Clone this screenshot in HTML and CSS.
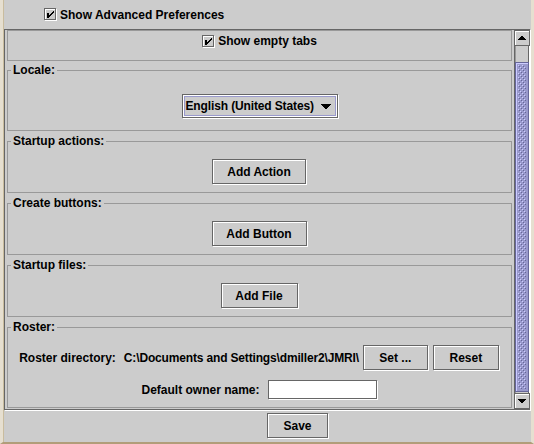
FILE: index.html
```html
<!DOCTYPE html>
<html>
<head>
<meta charset="utf-8">
<title>Preferences</title>
<link rel="stylesheet" href="styles.css">
</head>
<body>
<div class="window">
  <div class="top-row">
    <label class="check">
      <svg class="cb" width="13" height="13" viewBox="0 0 13 13" shape-rendering="crispEdges">
        <rect x="1.5" y="1.5" width="11" height="11" fill="none" stroke="#fff"/>
        <rect x="0.5" y="0.5" width="11" height="11" fill="none" stroke="#666"/>
        <rect x="3" y="5" width="2" height="5" fill="#000"/>
        <rect x="9" y="3" width="1" height="2" fill="#000"/>
        <rect x="8" y="4" width="1" height="2" fill="#000"/>
        <rect x="7" y="5" width="1" height="2" fill="#000"/>
        <rect x="6" y="6" width="1" height="2" fill="#000"/>
        <rect x="5" y="7" width="1" height="2" fill="#000"/>
      </svg>
      <span>Show Advanced Preferences</span>
    </label>
  </div>

  <div class="scrollpane">
    <div class="viewport">
      <div class="panel plain">
        <div class="row tabs-row">
          <label class="check">
            <svg class="cb" width="13" height="13" viewBox="0 0 13 13" shape-rendering="crispEdges">
              <rect x="1.5" y="1.5" width="11" height="11" fill="none" stroke="#fff"/>
              <rect x="0.5" y="0.5" width="11" height="11" fill="none" stroke="#666"/>
              <rect x="3" y="5" width="2" height="5" fill="#000"/>
              <rect x="9" y="3" width="1" height="2" fill="#000"/>
              <rect x="8" y="4" width="1" height="2" fill="#000"/>
              <rect x="7" y="5" width="1" height="2" fill="#000"/>
              <rect x="6" y="6" width="1" height="2" fill="#000"/>
              <rect x="5" y="7" width="1" height="2" fill="#000"/>
            </svg>
            <span>Show empty tabs</span>
          </label>
        </div>
      </div>

      <div class="panel titled locale">
        <div class="title">Locale:</div>
        <div class="row combo-row">
          <div class="combo">
            <div class="combo-inner">
              <span class="combo-text">English (United States)</span>
              <svg width="10" height="5" viewBox="0 0 10 5" shape-rendering="crispEdges">
                <path d="M0 0h10v1h-1v1h-1v1h-1v1h-1v1H4V4H3V3H2V2H1V1H0z" fill="#000"/>
              </svg>
            </div>
          </div>
        </div>
      </div>

      <div class="panel titled">
        <div class="title">Startup actions:</div>
        <div class="row btn-row"><button class="btn w-action">Add Action</button></div>
      </div>

      <div class="panel titled">
        <div class="title">Create buttons:</div>
        <div class="row btn-row"><button class="btn w-button">Add Button</button></div>
      </div>

      <div class="panel titled">
        <div class="title">Startup files:</div>
        <div class="row btn-row"><button class="btn w-file">Add File</button></div>
      </div>

      <div class="panel titled roster">
        <div class="title">Roster:</div>
        <div class="row btn-row roster-dir">
          <span class="lbl-dir">Roster directory:</span>
          <span class="lbl-path">C:\Documents and Settings\dmiller2\JMRI\</span>
          <button class="btn w-set">Set ...</button>
          <button class="btn w-reset">Reset</button>
        </div>
        <div class="row owner-row">
          <span class="lbl-owner">Default owner name:</span>
          <input class="field" type="text" value="">
        </div>
      </div>
    </div>

    <div class="scrollbar">
      <div class="sb-btn">
        <svg width="8" height="4" viewBox="0 0 8 4" shape-rendering="crispEdges">
          <path d="M3 0h2v1h1v1h1v1h1v1H0V3h1V2h1V1h1z" fill="#000"/>
        </svg>
      </div>
      <div class="sb-track">
        <div class="sb-thumb">
          <svg class="bumps" width="100%" height="100%" shape-rendering="crispEdges">
            <defs>
              <pattern id="bump" width="4" height="4" patternUnits="userSpaceOnUse">
                <rect x="0" y="0" width="1" height="1" fill="#ccccff"/>
                <rect x="2" y="2" width="1" height="1" fill="#ccccff"/>
                <rect x="1" y="1" width="1" height="1" fill="#666699"/>
                <rect x="3" y="3" width="1" height="1" fill="#666699"/>
              </pattern>
            </defs>
            <rect width="100%" height="100%" fill="url(#bump)"/>
          </svg>
        </div>
      </div>
      <div class="sb-btn">
        <svg width="8" height="4" viewBox="0 0 8 4" shape-rendering="crispEdges">
          <path d="M0 0h8v1h-1v1h-1v1h-1v1H3V3H2V2H1V1H0z" fill="#000"/>
        </svg>
      </div>
    </div>
  </div>

  <div class="bottom-row">
    <button class="btn w-save">Save</button>
  </div>
</div>
</body>
</html>
```

FILE: styles.css
```css
* {
  box-sizing: border-box;
}

html, body {
  margin: 0;
  padding: 0;
}

body {
  width: 534px;
  height: 444px;
  overflow: hidden;
  background: #cccccc;
  font: bold 12px "Liberation Sans", Arial, sans-serif;
  color: #000;
}

.window {
  height: 444px;
  border-left: 3px solid #e6dfd0;
  border-right: 3px solid #e6dfd0;
  border-bottom: 2px solid #b19d79;
  padding-left: 1px;
  box-shadow: inset 1px 0 0 #c9bc9e;
  background: #cccccc;
}

/* checkboxes */
.check {
  display: flex;
  align-items: center;
  gap: 3px;
  white-space: nowrap;
}

.cb {
  display: block;
  flex: none;
}

.top-row {
  height: 29px;
  display: flex;
  align-items: center;
  padding-left: 40px;
}

/* scroll pane */
.scrollpane {
  width: 526px;
  height: 381px;
  border: 1px solid #666666;
  border-right: none;
  box-shadow: 1px 1px 0 #ffffff;
  display: flex;
}

.viewport {
  flex: 0 0 509px;
  overflow: hidden;
  padding: 0 2px;
}

.panel {
  border: 1px solid #999999;
}

.plain {
  height: 31px;
  padding-top: 3px;
}

.tabs-row {
  height: 15px;
  display: flex;
  justify-content: center;
  align-items: center;
}

.titled {
  margin-top: 10px;
}

.titled.locale {
  margin-top: 9px;
}

.title {
  width: fit-content;
  height: 14px;
  line-height: 14px;
  margin: -8px 0 0 3px;
  padding: 0 2px;
  background: #cccccc;
  white-space: nowrap;
}

.row {
  display: flex;
  justify-content: center;
  align-items: flex-start;
}

.combo-row {
  margin-top: 17px;
  height: 25px;
  margin-bottom: 11px;
}

.btn-row {
  margin-top: 11px;
  height: 26px;
  margin-bottom: 7px;
}

.roster .btn-row {
  margin-bottom: 0;
  align-items: center;
}

/* combo box */
.combo {
  width: 156px;
  height: 24px;
  border: 1px solid #666666;
  background: #ffffff;
  padding: 1px;
  box-shadow: 1px 1px 0 #ffffff;
}

.combo-inner {
  height: 100%;
  border: 1px solid #9999cc;
  background: #cccccc;
  display: flex;
  align-items: center;
  justify-content: space-between;
  padding: 0 4px 0 1px;
  white-space: nowrap;
}

.combo-text {
  letter-spacing: -0.13px;
}

.combo-inner svg {
  display: block;
  margin-top: 1px;
}

/* buttons */
.btn {
  font: inherit;
  color: #000;
  height: 25px;
  padding: 0;
  border: 1px solid #666666;
  background: #cccccc;
  box-shadow: inset 1px 1px 0 #ffffff, 1px 1px 0 #ffffff;
  margin: 0 1px 1px 0;
  text-align: center;
  white-space: nowrap;
  border-radius: 0;
  flex: none;
}

.w-action { width: 94px; }
.w-button { width: 95px; }
.w-file { width: 77px; }
.w-set { width: 65px; }
.w-reset { width: 66px; }
.w-save { width: 61px; }

/* roster */
.lbl-dir {
  margin-right: 8px;
  white-space: nowrap;
}

.lbl-path {
  margin-right: 4px;
  white-space: nowrap;
  letter-spacing: -0.16px;
}

.w-set {
  margin-right: 5px;
}

.owner-row {
  margin-top: 9px;
  height: 20px;
  margin-bottom: 7px;
  align-items: center;
  gap: 8px;
}

.field {
  width: 109px;
  height: 19px;
  border: 1px solid #666666;
  background: #ffffff;
  box-shadow: 1px 1px 0 #ffffff;
  margin: 0 1px 1px 0;
  padding: 0 2px;
  font: inherit;
  outline: none;
}

/* scrollbar */
.scrollbar {
  flex: 0 0 16px;
  display: flex;
  flex-direction: column;
}

.sb-btn {
  flex: 0 0 16px;
  border: 1px solid #666666;
  background: #cccccc;
  box-shadow: inset 1px 1px 0 #ffffff;
  display: flex;
  align-items: center;
  justify-content: center;
}

.sb-btn svg {
  display: block;
}

.sb-track {
  flex: 1;
  border-left: 1px solid #666666;
  box-shadow: inset -1px 0 0 #ffffff, inset -2px 0 0 #666666, inset 1px 0 0 #999999;
  background: #cccccc;
  padding-top: 16px;
  padding-bottom: 1px;
}

.sb-thumb {
  height: 100%;
  width: 14px;
  border: 1px solid #666699;
  background: #9999cc;
  box-shadow: inset 1px 1px 0 #ccccff;
  padding: 2px;
}

.bumps {
  display: block;
}

/* bottom */
.bottom-row {
  margin-top: 3px;
  display: flex;
  justify-content: center;
  padding-left: 61px;
}
```
